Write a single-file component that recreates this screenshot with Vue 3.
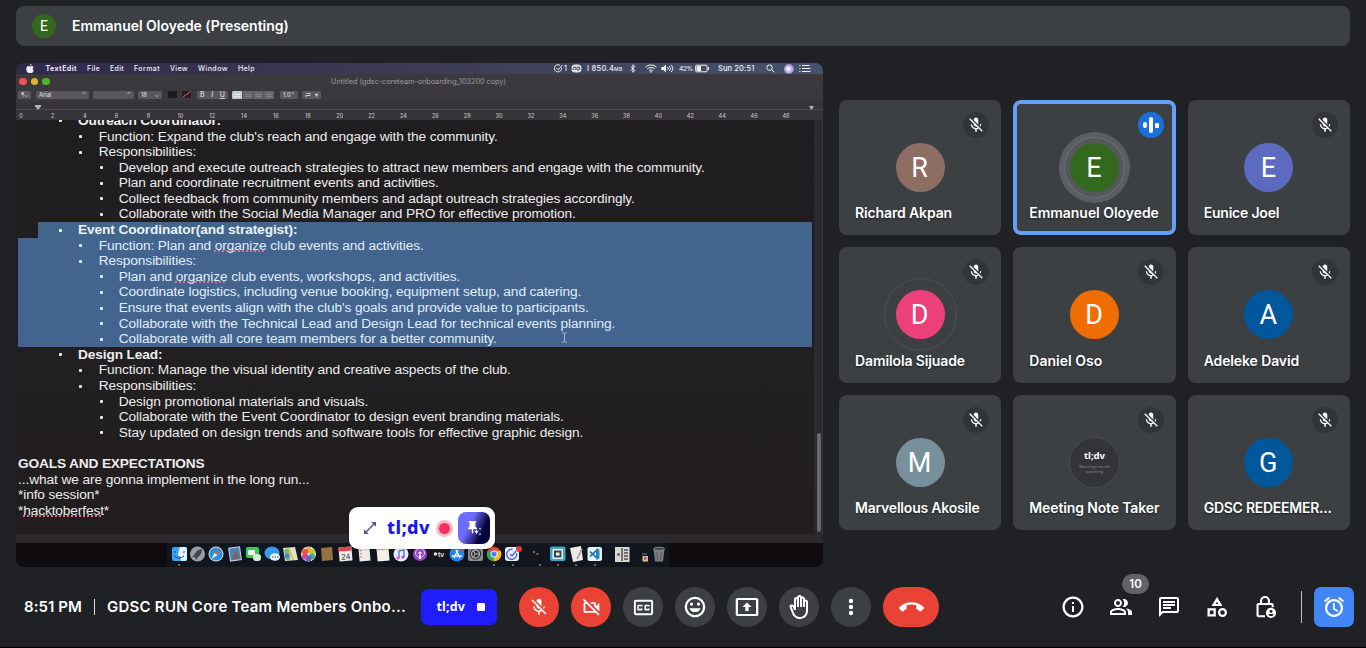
<script setup>
const icons = {
  micOff: 'M19 11h-1.7c0 .74-.16 1.43-.43 2.05l1.23 1.23c.56-.98.9-2.09.9-3.28zm-4.02.17c0-.06.02-.11.02-.17V5c0-1.66-1.34-3-3-3S9 3.34 9 5v.18l5.98 5.99zM4.27 3L3 4.27l6.01 6.01V11c0 1.66 1.33 3 2.99 3 .22 0 .44-.03.65-.08l1.66 1.66c-.71.33-1.5.52-2.31.52-2.76 0-5.3-2.1-5.3-5.1H5c0 3.41 2.72 6.23 6 6.72V21h2v-3.28c.91-.13 1.77-.45 2.54-.9L19.73 21 21 19.73 4.27 3z',
  camOff: 'M9.56 8l-2-2-4.15-4.14L2 3.27 4.73 6H4c-.55 0-1 .45-1 1v10c0 .55.45 1 1 1h12c.21 0 .39-.08.55-.18L19.73 21l1.41-1.41-8.86-8.86L9.56 8zM5 16V8h1.73l8 8H5zm10-8v2.61l6 6V6.5l-4 4V7c0-.55-.45-1-1-1h-5.61l2 2H15z',
  captions: 'M20 4H4c-1.1 0-2 .9-2 2v12c0 1.1.9 2 2 2h16c1.1 0 2-.9 2-2V6c0-1.1-.9-2-2-2zm0 14H4V6h16v12zM6.500 15h3.500c.55 0 1-.45 1-1v-1H9.200v.4h-2.100v-2.800h2.100v.4H11v-1c0-.55-.45-1-1-1H6.500c-.55 0-1 .45-1 1v4c0 .55.45 1 1 1zm7.500 0h3.500c.55 0 1-.45 1-1v-1h-1.800v.4h-2.100v-2.800h2.100v.4h1.800v-1c0-.55-.45-1-1-1H14c-.55 0-1 .45-1 1v4c0 .55.45 1 1 1z',
  smile: 'M12 1.700a10.300 10.300 0 1 0 0 20.600 10.300 10.300 0 0 0 0-20.600zm0 18.300a8 8 0 1 1 0-16 8 8 0 0 1 0 16zM8.500 7.500a1.600 1.600 0 1 0 0 3.200 1.600 1.600 0 0 0 0-3.200zm7 0a1.600 1.600 0 1 0 0 3.200 1.600 1.600 0 0 0 0-3.200zM6.500 13.200h11a5.700 5.300 0 0 1-11 0z',
  present: 'M21.500 3h-19C1.500 3 .7 3.800.7 4.800v14.400c0 1 .8 1.800 1.800 1.800h19c1 0 1.800-.8 1.800-1.800V4.800c0-1-.8-1.800-1.800-1.800zM21 18.900H3V5.100h18v13.800zM12 7.500l-4.600 4.600h2.900V16h3.400v-3.900h2.900z',
  hand: 'M21 7c0-1.38-1.12-2.5-2.5-2.5-.17 0-.34.02-.5.05V4c0-1.38-1.12-2.5-2.5-2.5-.23 0-.46.03-.67.09C14.46.66 13.56 0 12.5 0c-1.23 0-2.25.89-2.46 2.06C9.87 2.02 9.69 2 9.5 2 8.12 2 7 3.12 7 4.5v5.89c-.34-.31-.76-.54-1.22-.66L5.01 9.52c-.83-.23-1.7.09-2.19.83-.38.57-.4 1.31-.15 1.95l2.56 6.43C6.49 21.91 9.57 24 13 24c4.42 0 8-3.58 8-8V7zm-2 9c0 3.31-2.69 6-6 6-2.61 0-4.95-1.59-5.91-4.01l-2.6-6.54.53.14c.46.12.83.46 1 .9L7 15h2V4.500c0-.28.22-.5.5-.5s.5.22.5.5V12h2V2.500c0-.28.22-.5.5-.5s.5.22.5.5V12h2V4c0-.28.22-.5.5-.5s.5.22.5.5v8h2V7c0-.28.22-.5.5-.5s.5.22.5.5v9z',
  more: 'M12 8.200a2.200 2.200 0 1 0 0-4.400 2.200 2.200 0 0 0 0 4.400zm0 1.600a2.200 2.200 0 1 0 0 4.400 2.200 2.200 0 0 0 0-4.400zm0 6a2.200 2.200 0 1 0 0 4.400 2.200 2.200 0 0 0 0-4.400z',
  hangup: 'M12 9c-1.6 0-3.15.25-4.6.72v3.1c0 .39-.23.74-.56.9-.98.49-1.87 1.12-2.66 1.85-.18.18-.43.28-.7.28-.28 0-.53-.11-.71-.29L.29 13.08c-.18-.17-.29-.42-.29-.7 0-.28.11-.53.29-.71C3.34 8.78 7.46 7 12 7s8.66 1.78 11.71 4.67c.18.18.29.43.29.71 0 .28-.11.53-.29.71l-2.48 2.48c-.18.18-.43.29-.71.29-.27 0-.52-.11-.7-.28-.79-.74-1.69-1.36-2.67-1.85-.33-.16-.56-.5-.56-.9v-3.1C15.15 9.25 13.6 9 12 9z',
  info: 'M11 7h2v2h-2zm0 4h2v6h-2zm1-9.500C6.200 1.500 1.500 6.200 1.500 12s4.700 10.500 10.500 10.500 10.500-4.700 10.500-10.500S17.800 1.500 12 1.500zm0 18.800a8.300 8.300 0 1 1 0-16.600 8.300 8.300 0 0 1 0 16.600z',
  people: 'M15 4c-.47 0-.91.1-1.330.24a5.980 5.980 0 0 1 0 7.520c.42.14.86.24 1.330.24 2.210 0 4-1.790 4-4s-1.790-4-4-4zM9 4C6.790 4 5 5.790 5 8s1.790 4 4 4 4-1.790 4-4-1.790-4-4-4zm0 6a2 2 0 1 1 0-4 2 2 0 0 1 0 4zm7.670 3.130C18.040 14.060 19 15.320 19 17v3h4v-3c0-2.180-3.570-3.470-6.330-3.870zM9 13c-2.670 0-8 1.340-8 4v3h16v-3c0-2.660-5.330-4-8-4zm6 5H3v-.99C3.200 16.290 6.300 15 9 15s5.800 1.290 6 2v1z',
  chat: 'M4 4h16v12H5.170L4 17.170V4m0-2c-1.100 0-1.990.9-1.990 2L2 22l4-4h14c1.100 0 2-.9 2-2V4c0-1.100-.9-2-2-2H4zm2 10h8v2H6v-2zm0-3h12v2H6V9zm0-3h12v2H6V6z',
  shapes: 'M12 2L6.500 11h11L12 2zm0 4.800l1.400 2.200h-2.800L12 6.800zM17.500 13a4.500 4.500 0 1 0 0 9 4.500 4.500 0 0 0 0-9zm0 6.800a2.300 2.300 0 1 1 0-4.600 2.300 2.300 0 0 1 0 4.600zM2.500 21.500h8.300v-8.300H2.500v8.300zm2.300-6h3.700v3.700H4.800v-3.700z',
  lock: 'M12 1a5 5 0 0 0-5 5v2H5.500c-1.100 0-2 .9-2 2v10.200c0 1.100.9 2 2 2H12v-2H5.600V10h13v2.200h2.100V10c0-1.100-.9-2-2-2H17V6a5 5 0 0 0-5-5zm-2.900 7V6a2.900 2.900 0 0 1 5.800 0v2H9.100zM18 12.800a5.100 5.100 0 1 0 0 10.200 5.100 5.100 0 0 0 0-10.200zm0 1.900a1.500 1.500 0 1 1 0 3 1.500 1.500 0 0 1 0-3zm-2.700 4.800c.5-.8 4.900-.8 5.400 0-1 2-4.400 2-5.400 0z',
  alarm: 'M22 5.720l-4.600-3.860-1.290 1.530 4.600 3.860L22 5.720zM7.880 3.390L6.600 1.860 2 5.710l1.290 1.530 4.590-3.850zM12.800 8H11v6.200l4.200 2.900 1-1.600-3.400-2.300V8zM12 4c-4.970 0-9 4.030-9 9s4.020 9 9 9c4.970 0 9-4.030 9-9s-4.030-9-9-9zm0 15.800a6.800 6.800 0 1 1 0-13.600 6.800 6.800 0 0 1 0 13.600z'
}

const people = [
  { name: 'Richard Akpan', initial: 'R', tone: 'brown', w: 97 },
  { name: 'Emmanuel Oloyede', initial: 'E', tone: 'green', w: 129.500, speaking: true },
  { name: 'Eunice Joel', initial: 'E', tone: 'indigo', w: 75.500 },
  { name: 'Damilola Sijuade', initial: 'D', tone: 'pink', w: 110, ring: true },
  { name: 'Daniel Oso', initial: 'D', tone: 'orange', w: 73 },
  { name: 'Adeleke David', initial: 'A', tone: 'blue', w: 95.500 },
  { name: 'Marvellous Akosile', initial: 'M', tone: 'slate', w: 124.500 },
  { name: 'Meeting Note Taker', tone: 'dark', w: 130 },
  { name: 'GDSC REDEEMER...', initial: 'G', tone: 'blue', w: 128 }
]

const lines = [
  { l: 1, t: 'Outreach Coordinator:', w: 143 },
  { l: 2, t: "Function: Expand the club's reach and engage with the community.", w: 399 },
  { l: 2, t: 'Responsibilities:', w: 97.500 },
  { l: 3, t: 'Develop and execute outreach strategies to attract new members and engage with the community.', w: 586 },
  { l: 3, t: 'Plan and coordinate recruitment events and activities.', w: 320 },
  { l: 3, t: 'Collect feedback from community members and adapt outreach strategies accordingly.', w: 516 },
  { l: 3, t: 'Collaborate with the Social Media Manager and PRO for effective promotion.', w: 457 },
  { l: 1, t: 'Event Coordinator(and strategist):', w: 219.500, sel: 'first' },
  { l: 2, t: 'Function: Plan and |organize| club events and activities.', w: 325, sel: 'on' },
  { l: 2, t: 'Responsibilities:', w: 97.500, sel: 'on' },
  { l: 3, t: 'Plan and |organize| club events, workshops, and activities.', w: 341.500, sel: 'on' },
  { l: 3, t: 'Coordinate logistics, including venue booking, equipment setup, and catering.', w: 462.500, sel: 'on' },
  { l: 3, t: "Ensure that events align with the club's goals and provide value to participants.", w: 470, sel: 'on' },
  { l: 3, t: 'Collaborate with the Technical Lead and Design Lead for technical events planning.', w: 496.500, sel: 'on' },
  { l: 3, t: 'Collaborate with all core team members for a better community.', w: 378, sel: 'on' },
  { l: 1, t: 'Design Lead:', w: 84.500 },
  { l: 2, t: 'Function: Manage the visual identity and creative aspects of the club.', w: 412 },
  { l: 2, t: 'Responsibilities:', w: 97.500 },
  { l: 3, t: 'Design promotional materials and visuals.', w: 249.500 },
  { l: 3, t: 'Collaborate with the Event Coordinator to design event branding materials.', w: 445 },
  { l: 3, t: 'Stay updated on design trends and software tools for effective graphic design.', w: 464.500 },
  { l: 0, t: '' },
  { l: 0, t: 'GOALS AND EXPECTATIONS', w: 186.500, bold: true },
  { l: 0, t: '...what we are gonna implement in the long run...', w: 291.500 },
  { l: 0, t: '*info session*', w: 81.500 },
  { l: 0, t: '*|hacktoberfest|*', w: 91 }
]

const menus = [['TextEdit', 31.500], ['File', 13], ['Edit', 14], ['Format', 26], ['View', 18], ['Window', 30], ['Help', 17]]
const ruler = Array.from({ length: 25 }, (_, i) => i * 2)

const controls = [
  { icon: 'micOff', size: 20, kind: 'off' },
  { icon: 'camOff', size: 21, kind: 'off' },
  { icon: 'captions', size: 23 },
  { icon: 'smile', size: 24 },
  { icon: 'present', size: 24 },
  { icon: 'hand', size: 24 },
  { icon: 'more', size: 24 },
  { icon: 'hangup', size: 25, kind: 'leave' }
]
const panels = ['info', 'people', 'chat', 'shapes', 'lock']

// Spreads a label over its given width through letter-spacing.
const vFit = {
  mounted(el, { value }) {
    if (!value) return
    const n = el.textContent.length
    el.style.letterSpacing = (value - el.getBoundingClientRect().width) / n + 'px'
  }
}
</script>

<template>
  <div class="meet">
    <header class="banner">
      <span class="banner-avatar">E</span>
      <span v-fit="216.500" class="label banner-name">Emmanuel Oloyede (Presenting)</span>
    </header>

    <main class="stage">
      <section class="share">
        <div class="menubar">
          <svg class="apple icon" width="8" height="9" viewBox="0 0 8 9"><path d="M5.600 0c0 1-.7 1.800-1.700 1.800C3.900.8 4.700.1 5.600 0zM7.500 3.200c-1.200.8-1 2.500.3 3C7.300 7.600 6.500 9 5.600 9c-.6 0-.8-.3-1.500-.3S3.200 9 2.600 9C1.300 9 .2 6.900.2 5.100c0-2 1.200-3 2.300-3 .7 0 1.200.4 1.700.4s1-.5 1.900-.5c.6 0 1.100.3 1.400 1.200z" /></svg>
          <span v-for="m in menus" :key="m[0]" v-fit="m[1]" class="menu">{{ m[0] }}</span>
          <div class="status">
            <span class="pair"><svg width="9" height="9" viewBox="0 0 9 9"><path class="ln" d="M7.600 3.800A3.600 3.600 0 1 1 6 1.300M2.600 4l1.700 1.800L8.400 1" /></svg><span class="menu">1</span></span>
            <svg width="11" height="9" viewBox="0 0 11 9"><rect x=".5" y=".5" width="10" height="8" rx="3.500" fill="#dcdbe3" /><path d="M2.500 5.800a1.500 1.500 0 1 1 2.500-1.300l1.500 1.300a1.500 1.500 0 1 0 .3-2.800L4 5.800" fill="none" stroke="#3d3850" /></svg>
            <span class="mem big"><span v-fit="35.500">I 850.4<small>MB</small></span></span>
            <svg width="6" height="9" viewBox="0 0 6 9"><path class="ln" d="M.8 2.500l4 4L2.900 8.300V.7l1.900 1.800-4 4" /></svg>
            <svg width="12" height="9" viewBox="0 0 12 9"><path class="ln" d="M.5 3.200a7.800 7.800 0 0 1 11 0M2.300 5a5.200 5.200 0 0 1 7.400 0M4.200 6.600a2.600 2.600 0 0 1 3.600 0" /><circle cx="6" cy="7.800" r=".9" fill="#eee" /></svg>
            <svg width="13" height="9" viewBox="0 0 13 9"><path d="M.3 3h2L5 .8v7.400L2.300 6h-2z" fill="#eee" /><path class="ln" d="M6.500 3a2 2 0 0 1 0 3M8.300 2a3.500 3.500 0 0 1 0 5M10.200 1a5 5 0 0 1 0 7" /></svg>
            <span class="mem"><span v-fit="14">42%</span></span>
            <svg width="15" height="9" viewBox="0 0 15 9"><rect class="ln" x=".6" y="1.200" width="11.500" height="6.600" rx="1" /><rect x="1.500" y="2" width="4.500" height="5" fill="#eee" /><path d="M13 3h1v3h-1z" fill="#eee" /></svg>
            <span class="mem big"><span v-fit="36.500">Sun 20:51</span></span>
            <svg width="9" height="9" viewBox="0 0 9 9"><circle class="ln" cx="3.600" cy="3.600" r="2.700" /><path class="ln" d="M5.600 5.600l2.700 2.700" /></svg>
            <i class="siri"></i>
            <svg width="12" height="9" viewBox="0 0 12 9"><path class="ln" d="M.3 1.500h1.200M.3 4.500h1.200M.3 7.500h1.200M3 1.500h7.500M3 4.500h8.500M3 7.500h8.500" /></svg>
          </div>
        </div>
        <div class="titlebar">
          <i class="light red"></i><i class="light yellow"></i><i class="light lime"></i>
          <span class="title"><span v-fit="175">Untitled (gdsc-coreteam-onboarding_103200 copy)</span></span>
        </div>
        <div class="toolbar">
          <span class="tool t-para">¶⌄</span>
          <span class="tool t-font"><b>Arial</b><b>⌃</b></span>
          <span class="tool t-style"><b></b><b>⌃</b></span>
          <span class="tool t-size"><b>18</b><b>⌄</b></span>
          <i class="swatch"></i>
          <i class="swatch strike"></i>
          <span class="tool t-biu"><b>B</b><em>I</em><u>U</u></span>
          <span class="tool t-align"><i></i><i></i><i></i><i></i></span>
          <span class="tool t-space"><b>1.0</b><b>⌃</b></span>
          <span class="tool t-list"><b>≔</b><b>▾</b></span>
        </div>
        <div class="ruler">
          <i class="tab"></i><i class="tab tab-right"></i>
          <div class="ticks"><span v-for="n in ruler" :key="n">{{ n }}</span></div>
        </div>
        <div class="doc">
          <div class="sheet">
            <p v-for="(line, i) in lines" :key="i" class="line" :class="['l' + line.l, line.sel && 'sel-' + line.sel, { bold: line.bold || line.l === 1 }]">
              <span v-if="line.l" class="bullet"></span>
              <span v-fit="line.w" class="words"><template v-for="(part, k) in line.t.split('|')" :key="k"><span :class="{ typo: k === 1 }">{{ part }}</span></template></span>
            </p>
          </div>
          <div class="track"><i class="thumb"></i></div>
          <svg class="ibeam" width="7" height="11" viewBox="0 0 7 11"><path d="M1 .8h1.800l.7.7.7-.7H6M3.500 1.500v8M1 10.200h1.800l.7-.7.7.7H6" /></svg>
        </div>
        <div class="shelf"></div>
        <svg class="dock" width="807" height="24" viewBox="16 543 807 24">
          <rect x="16" y="543" width="807" height="24" fill="#100b0e" />
          <rect x="167" y="543" width="502" height="24" fill="#11151d" />
          <g><rect x="172" y="547" width="15" height="14" rx="2" fill="#35a5f4" /><path d="M180 547h5a2 2 0 0 1 2 2v10a2 2 0 0 1-2 2h-4l-1-5h-2q0-5 2-9z" fill="#e5f1fb" /><path d="M175 551v2M184 551v2M174 556q5 4 10 0" stroke="#174c88" fill="none" /></g>
          <g><circle cx="197.500" cy="554" r="7.500" fill="#9b9ea4" /><path d="M202 549q-5 0-8 6l-2 2 3 0 1 3 2-3q4-3 4-8z" fill="#44474f" /></g>
          <g><circle cx="216" cy="554" r="7.500" fill="#d9e3ea" /><circle cx="216" cy="554" r="6.600" fill="#2793dd" /><path d="M220.500 549l-3 6-3-2z" fill="#ec5044" /><path d="M211.500 559l3-6 3 2z" fill="#f0f3f5" /></g>
          <g transform="rotate(-8 234.500 554)"><rect x="229" y="547" width="12" height="14" fill="#c8d2df" /><rect x="230" y="548" width="10" height="12" fill="#4e82b8" /><path d="M231 559l6-9 2 9z" fill="#746b57" /></g>
          <g><rect x="246" y="547" width="13" height="11" rx="2" fill="#31cf55" /><rect x="248" y="550" width="7" height="5" rx="1" fill="#f3fff3" /><rect x="253" y="554" width="8" height="7" rx="3" fill="#d3ecd4" /></g>
          <g><ellipse cx="272" cy="553" rx="7.500" ry="6.500" fill="#379cf0" /><ellipse cx="275" cy="557" rx="5" ry="3.800" fill="#eff6ff" /><path d="M272 557h1.500m1 0h1.500m1 0h1.500" stroke="#2458a0" /></g>
          <g><path d="M283 548l12-1 3 13-13 1z" fill="#dbe4ca" /><path d="M284 550l5-2 1 12-4 0z" fill="#78b985" /><path d="M289 549l4 11" stroke="#e8be46" stroke-width="2" /><circle cx="287" cy="556" r="2.500" fill="#4e86d1" /></g>
          <g><circle cx="308.500" cy="554" r="7.500" fill="#f1e7da" /><circle cx="308.500" cy="550" r="3" fill="#f3a329" /><circle cx="312" cy="552" r="3" fill="#b8c846" /><circle cx="312" cy="556.500" r="3" fill="#4ba899" /><circle cx="308.500" cy="558.500" r="3" fill="#5868bb" /><circle cx="305" cy="556.500" r="3" fill="#bf4b9b" /><circle cx="305" cy="552" r="3" fill="#e25545" /></g>
          <path d="M321 548l11-1 1 13-11 1z" fill="#98723e" />
          <g transform="rotate(-5 345.500 554)"><rect x="339" y="547" width="13" height="14" rx="1" fill="#eeeae9" /><rect x="339" y="547" width="13" height="4" fill="#dc4540" /><text x="345.500" y="559.500" font-size="8" text-anchor="middle" fill="#333">24</text></g>
          <g transform="rotate(-5 364 554)"><rect x="359" y="547" width="11" height="14" fill="#ece9e8" /><path d="M361 550v1m0 2v1m0 2v1" stroke="#d7594d" stroke-width="1.500" /></g>
          <g transform="rotate(-5 382.500 554)"><rect x="377" y="547" width="12" height="14" fill="#f2f0e9" /><rect x="377" y="547" width="12" height="3" fill="#e9c85a" /></g>
          <g><circle cx="401" cy="554" r="7.500" fill="#edeaf5" /><path d="M399 558v-7l5-1v7" fill="none" stroke="#5a83df" stroke-width="1.500" /><circle cx="398" cy="558" r="1.500" fill="#d75dbd" /><circle cx="403" cy="557" r="1.500" fill="#8061d8" /></g>
          <g><circle cx="420" cy="554" r="7" fill="#9b3fd1" /><circle cx="420" cy="553" r="4.500" fill="none" stroke="#e6c9f5" /><circle cx="420" cy="553" r="1.500" fill="#fff" /><path d="M420 555v4" stroke="#fff" stroke-width="2" /></g>
          <g><rect x="431" y="547" width="15" height="14" rx="3" fill="#18171a" /><circle cx="435.500" cy="554" r="1.800" fill="#ddd" /><text x="438" y="556.500" font-size="7" font-weight="700" fill="#ddd">tv</text></g>
          <g><circle cx="457" cy="554" r="7.500" fill="#2686ec" /><path d="M454 558l4-8m2 8l-4-8m-4 6h10" stroke="#e8f4ff" stroke-width="1.500" /><circle cx="463" cy="549" r="2" fill="#e24842" /></g>
          <g><rect x="468" y="547" width="15" height="14" rx="2" fill="#8b8d8f" /><circle cx="475.500" cy="554" r="5.800" fill="#2f3234" /><circle cx="475.500" cy="554" r="4" fill="none" stroke="#b3b5b5" stroke-width="1.300" /><path d="M475 554h5m-5 0l-2-4m2 4l-2 4" stroke="#b3b5b5" /></g>
          <g><circle cx="494" cy="554" r="7.200" fill="#e94435" /><path d="M487.500 551a7.200 7.200 0 0 0 6 10.200l3-7z" fill="#34a853" /><path d="M494 561.200a7.200 7.200 0 0 0 6.500-10.500h-7z" fill="#fbbc05" /><circle cx="494" cy="554" r="3.500" fill="#eef3f9" /><circle cx="494" cy="554" r="2.600" fill="#4285f4" /></g>
          <g><rect x="505" y="547" width="14" height="14" rx="3" fill="#edf0f7" /><path d="M516.500 553a5 5 0 1 1-4-3.600M510 554l2 2 4-5" fill="none" stroke="#526edc" stroke-width="1.500" /><circle cx="519" cy="549" r="3" fill="#e4393b" /></g>
          <g><rect x="531" y="547" width="15" height="14" rx="2" fill="#151419" /><path d="M533 551l2 1-2 1m3 1h3" fill="none" stroke="#aaa" stroke-width=".8" /></g>
          <g><rect x="550" y="546.500" width="15.500" height="14.500" rx="2" fill="#35a9ce" /><rect x="552.500" y="549" width="10.500" height="10" fill="#eaf3f5" /><rect x="554" y="550.500" width="7.500" height="7" fill="#39464c" /><rect x="556" y="552.500" width="3.500" height="3" fill="#eaf3f5" /></g>
          <g><path d="M570 548l11-2 2 14-10 2z" fill="#ece9e7" /><path d="M577 559l5-10" stroke="#999" stroke-width="1.500" /></g>
          <g><rect x="587.500" y="547" width="14.500" height="14" rx="2" fill="#e8f1f8" /><path d="M590 551.500l7 6.500v-8l-7 6.500" fill="none" stroke="#1b6fa8" stroke-width="1.700" /><path d="M596.500 548.500l3 1v9l-3 1z" fill="#2587c6" /></g>
          <g><rect x="615" y="547" width="14.500" height="15" fill="#dad8d5" /><path d="M622 548v13M624 550h4m-4 3h4m-4 3h4m-4 3h4" stroke="#514d4c" stroke-width="1.500" /><circle cx="618.500" cy="554.500" r="1.500" fill="#666" /></g>
          <path d="M642 554h5" stroke="#777fc3" /><rect x="642.500" y="556" width="5.500" height="5.500" fill="#ddc37e" /><rect x="644" y="557" width="2.500" height="2.500" fill="#ae5486" />
          <g><path d="M653.500 549h11l-1.500 12.500h-8z" fill="#7b797a" /><ellipse cx="659" cy="549" rx="5.500" ry="1.800" fill="#4a494b" stroke="#999" stroke-width=".8" /><path d="M657 552l.5 8m3.500-8l-.5 8" stroke="#5a585b" /></g>
          <path d="M178 565h2m313 0h2m17 0h2m25 0h2m16 0h2m16 0h2m17 0h2" stroke="#b9c4c4" stroke-width="1.200" />
        </svg>

        <div class="recorder">
          <svg width="14" height="14" viewBox="0 0 14 14"><path d="M2.500 11.500l9-9" fill="none" stroke="#55538f" stroke-width="1.500" /><path d="M8.300 1H13v4.700zM1 8.300V13h4.700z" fill="#55538f" /></svg>
          <span class="rec-name"><span v-fit="43">tl;dv</span></span>
          <i class="rec-dot"></i>
          <span class="pin">
            <svg class="icon" width="18" height="18" viewBox="0 0 18 18"><path d="M3.800 2h7.400v1.300h-.8v4.200l1.500 1.600v1.100H8.200v3.600l-.7 1-.7-1v-3.600H3.100V9.100l1.500-1.600V3.300h-.8z" /><path d="M11.500 10.200l.8 1.700 1.700.8-1.700.8-.8 1.700-.8-1.700-1.700-.8 1.700-.8zM15 8.500l.4 1 .9.400-.9.400-.4.900-.4-.9-1-.4 1-.4zM15 13.800l.4.9.9.4-.9.4-.4 1-.4-1-1-.4 1-.4z" /></svg>
          </span>
        </div>
      </section>

      <section class="tiles">
        <article v-for="p in people" :key="p.name" class="tile" :class="{ speaking: p.speaking }">
          <span class="avatar" :class="[p.tone, { halo: p.speaking, ring: p.ring }]">
            <span v-if="p.initial" class="initial">{{ p.initial }}</span>
            <template v-else><b>tl;dv</b><small>Meetings worth<br />watching</small></template>
          </span>
          <span v-if="p.speaking" class="badge live"><i></i><i></i><i></i></span>
          <span v-else class="badge"><svg class="icon" width="18" height="18" viewBox="0 0 24 24"><path :d="icons.micOff" /></svg></span>
          <span class="name"><span v-fit="p.w" class="label">{{ p.name }}</span></span>
        </article>
      </section>
    </main>

    <footer class="bar">
      <div class="meeting">
        <span v-fit="58" class="label">8:51 PM</span>
        <i class="sep"></i>
        <span v-fit="299" class="label">GDSC RUN Core Team Members Onbo...</span>
      </div>
      <button class="stop"><span v-fit="28.500">tl;dv</span><i></i></button>
      <div class="controls">
        <button v-for="c in controls" :key="c.icon" class="round" :class="c.kind"><svg class="icon" :width="c.size" :height="c.size" viewBox="0 0 24 24"><path :d="icons[c.icon]" /></svg></button>
      </div>
      <div class="panels">
        <span v-for="n in panels" :key="n" class="panel">
          <svg class="icon" width="24" height="24" viewBox="0 0 24 24"><path :d="icons[n]" fill-rule="evenodd" /></svg>
          <b v-if="n === 'people'" class="count">10</b>
        </span>
      </div>
      <i class="divider"></i>
      <button class="alarm"><svg class="icon" width="24" height="24" viewBox="0 0 24 24"><path :d="icons.alarm" /></svg></button>
    </footer>
  </div>
</template>

<style>
body { background: #202124; }
</style>

<style scoped>
* { box-sizing: border-box; }
.meet { width: 1366px; height: 648px; overflow: hidden; background: #202124; border-bottom: 1px solid #000; padding: 6px 16px 0; color: #fff; font-family: Inter, sans-serif; display: flex; flex-direction: column; }
svg { display: block; flex: none; }
.icon { fill: currentColor; }
button { border: 0; padding: 0; margin: 0; color: #fff; font: inherit; }
.label { display: inline-block; white-space: nowrap; font-weight: 600; }
.banner { height: 40px; flex: none; width: 1334px; border-radius: 8px; background: #3c4043; display: flex; align-items: center; padding-left: 16px; gap: 16px; }
.banner-avatar { width: 24px; height: 24px; border-radius: 50%; background: #33691e; font: 14px/25px Roboto, sans-serif; text-align: center; }
.banner-name { font-size: 14px; padding-bottom: 2px; }

.stage { display: flex; height: 504px; margin-top: 17px; flex: none; }
.share { position: relative; width: 807px; height: 504px; border-radius: 8px; overflow: hidden; background: #211e20; display: flex; flex-direction: column; flex: none; }
.menubar { height: 11px; flex: none; display: flex; align-items: center; gap: 10px; padding-left: 10px; background: linear-gradient(90deg, #30294b, #3e3a53 50%, #46536a); color: #eeedf2; }
.apple { margin-right: 1.500px; }
.menu { font-size: 7px; line-height: 11px; white-space: nowrap; font-weight: 500; }
.menu:nth-of-type(1) { font-weight: 700; }
.status { margin-left: auto; width: 269px; display: grid; grid-template-columns: 17px 16px 43px 15px 16px 18px 16px 23px 48px 18px 15px 24px; align-items: center; }
.status > * { min-width: 0; }
.pair { display: flex; gap: 1px; }
.pair .menu { font-weight: 500; line-height: 10px; }
.mem { font-size: 6.500px; line-height: 10px; white-space: nowrap; font-weight: 500; }
.big { font-size: 7.500px; }
.mem span { display: inline-block; }
.mem small { font-size: 5px; }
.ln { fill: none; stroke: #eeeef2; stroke-width: 1; }
.siri { width: 10px; height: 10px; border-radius: 50%; background: radial-gradient(circle at 45% 50%, #fff 10%, #a9c4f4 40%, #c06bca 70%, #43519b); }
.titlebar { height: 15px; flex: none; display: flex; align-items: center; gap: 4px; padding-left: 3px; background: #3b393e; position: relative; }
.light { width: 7.500px; height: 7.500px; border-radius: 50%; }
.red { background: #f2504b; }
.yellow { background: #dfb42b; }
.lime { background: #4ab52f; }
.title { margin-left: 277.500px; font-size: 7.300px; line-height: 14px; color: #9b999f; white-space: nowrap; }
.title span { display: inline-block; }
.toolbar { height: 13px; flex: none; background: #3a383c; display: flex; align-items: center; padding: 0 0 2px 2px; color: #cfcdd1; font-size: 5.500px; line-height: 8px; }
.tool { height: 8px; background: #59575b; border-radius: 1.500px; display: flex; justify-content: space-between; padding: 0 3px; white-space: nowrap; overflow: hidden; }
.tool b, .tool em, .tool u { font-weight: 600; }
.t-para { width: 13px; }
.t-font { width: 53px; margin-left: 5px; }
.t-style { width: 41px; margin-left: 4px; }
.t-size { width: 24px; margin-left: 4px; }
.swatch { width: 9px; height: 7px; margin-left: 6px; background: #1c1b1d; }
.swatch + .swatch { margin-left: 5px; }
.strike { background: linear-gradient(145deg, #2a1a20 44%, #a25565 46%, #a25565 54%, #2a1a20 56%); }
.t-biu { width: 31px; margin-left: 6px; font-size: 7px; }
.t-align { width: 42px; margin-left: 4px; padding: 0; gap: 1px; }
.t-align i { flex: 1; background: repeating-linear-gradient(#68666a 0 1px, #858387 1px 2px); border: 2px solid #68666a; }
.t-align i:first-child { background: repeating-linear-gradient(#c9c7ca 0 1px, #ececec 1px 2px); border-color: #cccace; }
.t-space { width: 18px; margin-left: 6px; }
.t-list { width: 19px; margin-left: 4px; }
.ruler { height: 18px; flex: none; position: relative; background: #363438; padding-top: 9px; overflow: hidden; }
.ruler::before { content: ""; position: absolute; left: 0; right: 0; top: 7px; height: 1px; background: #4b494e; }
.tab { position: absolute; left: 19px; top: 3px; width: 6px; height: 5px; background: #b3b1b5; clip-path: polygon(0 0, 100% 0, 100% 25%, 50% 100%, 0 25%); }
.tab-right { left: 793px; top: 4px; width: 5px; height: 4px; clip-path: polygon(0 0, 100% 0, 50% 100%); }
.ticks { display: flex; margin-left: -11px; width: 797px; }
.ticks span { width: 31.880px; flex: none; text-align: center; font: 500 5.500px/10px Inter, sans-serif; color: #c1bfc3; }
.doc { height: 414px; flex: none; position: relative; overflow: hidden; background: linear-gradient(#1f1d20, #211f21 50%, #221e20); }
.sheet { margin: -7.100px 11px 0 2px; }
.line { margin: 0; height: 15.600px; line-height: 16px; font-family: "Liberation Sans", Arial, sans-serif; font-size: 13.700px; color: #eeedee; display: flex; white-space: pre; }
.words { display: inline-block; flex: none; }
.bold { font-weight: 700; }
.bullet { width: 19px; flex: none; position: relative; }
.bullet::before { content: ""; position: absolute; left: 0; top: 6.500px; width: 3px; height: 3px; border-radius: 1px; background: currentColor; }
.l1 { padding-left: 41px; }
.l2 { padding-left: 61px; }
.l3 { padding-left: 81.500px; }
.l2 .bullet { width: 19.700px; }
.l3 .bullet { width: 19.300px; }
.sel-on { background: #43648e; color: #e0eefb; }
.sel-first { background: #41658b; color: #e9f3fc; margin-left: 20px; padding-left: 21px; }
.typo { text-decoration: underline dotted #d3728a 1.500px; text-underline-offset: 1px; text-decoration-skip-ink: none; }
.track { position: absolute; right: 0; top: 0; width: 9px; height: 414px; background: #2a292d; border-right: 1px solid #38363a; }
.thumb { position: absolute; left: 3px; top: 313px; width: 4px; height: 99px; border-radius: 2px; background: #69676a; }
.ibeam { position: absolute; left: 545px; top: 212px; }
.ibeam path { fill: none; stroke: #a9bdd0; stroke-width: 1; }
.shelf { height: 9px; flex: none; background: #2b292c; }
.dock { font-family: "Liberation Sans", sans-serif; }

.recorder { position: absolute; left: 333px; top: 444px; width: 146px; height: 42px; border-radius: 9px; background: #fff; display: flex; align-items: center; padding: 0 5px 0 14px; box-shadow: 0 0 2px rgba(0, 0, 0, .4); }
.rec-name { margin-left: 10px; width: 49px; font: 800 18px/37px "Noto Sans", "Open Sans", sans-serif; color: #1b16f5; padding-bottom: 2px; }
.rec-name span { display: inline-block; }
.rec-dot { width: 17px; height: 17px; border-radius: 50%; border: 3px solid #fbb9c7; background: #f0325c; }
.pin { margin-left: auto; width: 32px; height: 32px; border-radius: 8px; background: linear-gradient(115deg, #6c6cff 36%, #06043c 72%); display: grid; place-items: center; }

.tiles { width: 511px; height: 430px; margin: 37px 0 0 16px; display: grid; grid-template-columns: repeat(3, 1fr); grid-template-rows: repeat(3, 1fr); gap: 12px; flex: none; }
.tile { position: relative; background: #3c4043; border-radius: 8px; display: grid; place-items: center; }
.speaking::after { content: ""; position: absolute; inset: 0; border: 4px solid #669df6; border-radius: 8px; }
.avatar { width: 49px; height: 49px; border-radius: 50%; font: 27px/50px Roboto, sans-serif; text-align: center; position: relative; }
.initial { display: block; margin-right: 1px; }
.brown { background: #8d6e63; }
.green { background: #33691e; }
.indigo { background: #5c6bc0; }
.pink { background: #ec407a; }
.orange { background: #ef6c00; }
.blue { background: #01579b; }
.slate { background: #78909c; }
.dark { background: #333438; box-shadow: 0 0 0 .5px #55585b; display: flex; flex-direction: column; align-items: center; padding-top: 11px; }
.dark b { font: 700 9.500px/14px "Noto Sans", "Open Sans", sans-serif; }
.dark small { font: 4.200px/5px "Open Sans", sans-serif; color: #8b8c8f; white-space: nowrap; margin-top: 1px; }
.halo { box-shadow: 0 0 0 5px #55585b, 0 0 0 6px #6b6e71, 0 0 0 11px #5a5d61; }
.ring::after { content: ""; position: absolute; inset: -12px; border: 1px solid #4c5053; border-radius: 50%; }
.badge { position: absolute; right: 12px; top: 12px; width: 26px; height: 26px; border-radius: 50%; background: #313438; display: flex; align-items: center; justify-content: center; }
.live { background: #1b6fdc; gap: 2px; }
.live i { width: 4px; height: 6px; border-radius: 2px; background: #fff; }
.live i:nth-child(2) { height: 16px; }
.live i:nth-child(3) { height: 5px; border-radius: 1px; }
.name { position: absolute; left: 16px; bottom: 12px; font-size: 14px; line-height: 20px; text-shadow: 0 1px 2px rgba(0, 0, 0, .6); }

.bar { height: 80px; display: flex; align-items: center; padding-left: 8px; flex: none; }
.meeting { display: flex; align-items: center; font-size: 15px; width: 397px; flex: none; }
.meeting .label { padding-bottom: 2px; }
.sep { width: 1px; height: 16px; background: #dcdcdc; margin: 0 12px; }
.stop { width: 76px; height: 36px; border-radius: 7px; background: #1d1dff; display: flex; align-items: center; padding-left: 15.500px; gap: 12px; font: 700 12.500px/18px "Noto Sans", "Open Sans", sans-serif; flex: none; }
.stop span { display: inline-block; padding-bottom: 1px; }
.stop i { width: 8px; height: 8px; border-radius: 1px; background: #fff; }
.controls { display: flex; gap: 12px; margin-left: 22px; flex: none; }
.round { width: 40px; height: 40px; border-radius: 20px; background: #3c4043; display: grid; place-items: center; }
.off { background: #ea4335; }
.leave { width: 56px; background: #ea4335; }
.panels { display: flex; margin-left: 110px; flex: none; }
.panel { position: relative; width: 48px; height: 40px; display: grid; place-items: center; }
.count { position: absolute; left: 25px; top: -13px; width: 27px; height: 20px; border-radius: 10px; background: #5f6368; font-size: 11.500px; line-height: 20px; text-align: center; font-weight: 600; }
.divider { width: 1px; height: 32px; background: #bdc1c6; margin-left: 12px; flex: none; }
.alarm { width: 40px; height: 40px; border-radius: 7px; background: #4285f4; display: grid; place-items: center; margin-left: 12px; flex: none; }
</style>
